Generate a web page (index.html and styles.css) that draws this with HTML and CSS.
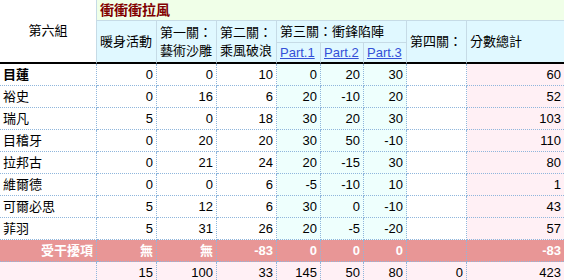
FILE: index.html
```html
<!DOCTYPE html>
<html lang="zh-TW">
<head>
<meta charset="utf-8">
<title>第六組</title>
<link rel="stylesheet" href="styles.css">
</head>
<body>
<div class="sheet">
  <div class="h group">第六組</div>
  <div class="h title">衝衝衝拉風</div>
  <div class="h s2 c2">暖身活動</div>
  <div class="h s2 c3 two">第一關：<br>藝術沙雕</div>
  <div class="h s2 c4 two">第二關：<br>乘風破浪</div>
  <div class="h stage3">第三關：衝鋒陷陣</div>
  <div class="h s2 c8">第四關：</div>
  <div class="h s2 c9">分數總計</div>
  <div class="h part"><a href="#p1">Part.1</a></div>
  <div class="h part"><a href="#p2">Part.2</a></div>
  <div class="h part"><a href="#p3">Part.3</a></div>

  <div class="d name strong">目蓮</div><div class="d n">0</div><div class="d n">0</div><div class="d n">10</div><div class="d n cy">0</div><div class="d n cy">20</div><div class="d n cy">30</div><div class="d n"></div><div class="d n pk">60</div>
  <div class="d name">裕史</div><div class="d n">0</div><div class="d n">16</div><div class="d n">6</div><div class="d n cy">20</div><div class="d n cy">-10</div><div class="d n cy">20</div><div class="d n"></div><div class="d n pk">52</div>
  <div class="d name">瑞凡</div><div class="d n">5</div><div class="d n">0</div><div class="d n">18</div><div class="d n cy">30</div><div class="d n cy">20</div><div class="d n cy">30</div><div class="d n"></div><div class="d n pk">103</div>
  <div class="d name">目稽牙</div><div class="d n">0</div><div class="d n">20</div><div class="d n">20</div><div class="d n cy">30</div><div class="d n cy">50</div><div class="d n cy">-10</div><div class="d n"></div><div class="d n pk">110</div>
  <div class="d name">拉邦古</div><div class="d n">0</div><div class="d n">21</div><div class="d n">24</div><div class="d n cy">20</div><div class="d n cy">-15</div><div class="d n cy">30</div><div class="d n"></div><div class="d n pk">80</div>
  <div class="d name">維爾德</div><div class="d n">0</div><div class="d n">0</div><div class="d n">6</div><div class="d n cy">-5</div><div class="d n cy">-10</div><div class="d n cy">10</div><div class="d n"></div><div class="d n pk">1</div>
  <div class="d name">可爾必思</div><div class="d n">5</div><div class="d n">12</div><div class="d n">6</div><div class="d n cy">30</div><div class="d n cy">0</div><div class="d n cy">-10</div><div class="d n"></div><div class="d n pk">43</div>
  <div class="d name">菲羽</div><div class="d n">5</div><div class="d n">31</div><div class="d n">26</div><div class="d n cy">20</div><div class="d n cy">-5</div><div class="d n cy">-20</div><div class="d n"></div><div class="d n pk">57</div>
  <div class="d n red">受干擾項</div><div class="d n red">無</div><div class="d n red">無</div><div class="d n red">-83</div><div class="d n red">0</div><div class="d n red">0</div><div class="d n red">0</div><div class="d n red"></div><div class="d n red">-83</div>
  <div class="d n tot"></div><div class="d n tot">15</div><div class="d n tot">100</div><div class="d n tot">33</div><div class="d n tot">145</div><div class="d n tot">50</div><div class="d n tot">80</div><div class="d n tot">0</div><div class="d n tot">423</div>
</div>
</body>
</html>
```

FILE: styles.css
```css
html, body {
  margin: 0;
  padding: 0;
  background: #ffffff;
}

body {
  font-family: "Liberation Sans", "Noto Sans CJK TC", sans-serif;
  font-size: 13px;
  color: #000000;
  overflow: hidden;
}

.sheet {
  display: grid;
  grid-template-columns: 97px 60px 60px 60px 44px 43px 43px 60px 97px;
  grid-template-rows: 21px 22px 21px repeat(10, 22px);
  width: 564px;
}

.sheet > div {
  box-sizing: border-box;
  display: flex;
  align-items: center;
  line-height: 18px;
  white-space: nowrap;
}

/* header */
.h {
  border-right: 1px solid #c6dbe6;
  border-bottom: 1px solid #c6dbe6;
  background: #e0f8ff;
  padding-left: 3px;
}

.group {
  grid-column: 1;
  grid-row: 1 / 4;
  background: #ffffff;
  justify-content: center;
  padding-left: 0;
  border-bottom: 2px solid #000000;
}

.title {
  grid-column: 2 / 10;
  grid-row: 1;
  background: #f0ffe8;
  color: #800000;
  font-weight: bold;
  font-size: 14px;
  border-right: none;
}

.s2 {
  grid-row: 2 / 4;
  border-bottom: 2px solid #000000;
}

.c2 { grid-column: 2; }
.c3 { grid-column: 3; }
.c4 { grid-column: 4; }
.c8 { grid-column: 8; }
.c9 { grid-column: 9; border-right: none; }

.two {
  white-space: normal;
}

.stage3 {
  grid-column: 5 / 8;
  grid-row: 2;
}

.part {
  grid-row: 3;
  border-bottom: 2px solid #000000;
}

.part a {
  color: #3450d8;
  text-decoration: underline;
}

/* data */
.d {
  border-right: 1px dotted #8fb6dc;
  border-bottom: 1px dotted #8fb6dc;
  padding: 0 3px;
}

.d:nth-child(9n + 2) {
  border-right: none;
}

.name {
  justify-content: flex-start;
}

.strong {
  font-weight: bold;
}

.n {
  justify-content: flex-end;
}

.cy {
  background: #eefffd;
}

.pk {
  background: #fff0f5;
}

.red {
  background: #e89696;
  color: #ffffff;
  font-weight: bold;
}

.tot {
  background: #fff0f5;
}
```
